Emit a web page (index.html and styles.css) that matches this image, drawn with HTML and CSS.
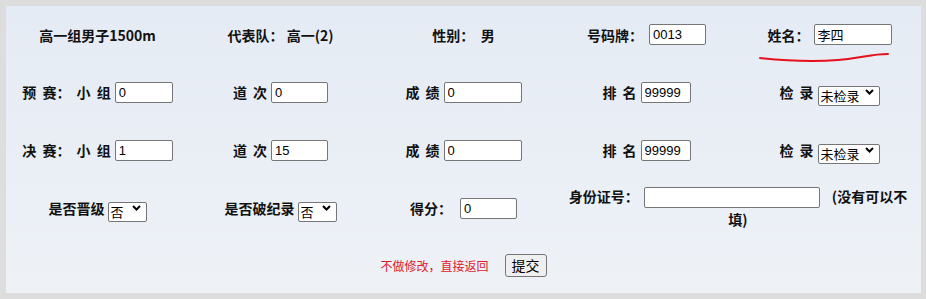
FILE: index.html
```html
<!DOCTYPE html>
<html lang="zh-CN">
<head>
<meta charset="utf-8">
<title>成绩修改</title>
<link rel="stylesheet" href="styles.css">
</head>
<body>
<div class="panel">
  <form class="grid">
    <div class="cell"><span class="lbl">高一组男子1500m</span></div>
    <div class="cell"><span class="lbl">代表队：&nbsp;高一(2)</span></div>
    <div class="cell"><span class="lbl">性别：&nbsp;&nbsp;男</span></div>
    <div class="cell"><span class="lbl">号码牌：</span><input class="in w57 ml6" type="text" value="0013"></div>
    <div class="cell"><span class="lbl">姓名：</span><input class="in w78 ml4" type="text" value="李四"></div>

    <div class="cell"><span class="lbl sp">预 赛： 小 组</span><input class="in w58 ml4" type="text" value="0"></div>
    <div class="cell"><span class="lbl sp">道 次</span><input class="in w57 ml4" type="text" value="0"></div>
    <div class="cell"><span class="lbl sp">成 绩</span><input class="in w78 ml4" type="text" value="0"></div>
    <div class="cell"><span class="lbl sp">排 名</span><input class="in w50 ml4" type="text" value="99999"></div>
    <div class="cell"><span class="lbl sp">检 录</span><span class="selwrap ml4"><select class="sel w62"><option>未检录</option><option>已检录</option></select><svg class="chev" width="9" height="6" viewBox="0 0 9 6"><path d="M1 1 L4.5 4.5 L8 1" fill="none" stroke="#000" stroke-width="2"/></svg></span></div>

    <div class="cell"><span class="lbl sp">决 赛： 小 组</span><input class="in w58 ml4" type="text" value="1"></div>
    <div class="cell"><span class="lbl sp">道 次</span><input class="in w57 ml4" type="text" value="15"></div>
    <div class="cell"><span class="lbl sp">成 绩</span><input class="in w78 ml4" type="text" value="0"></div>
    <div class="cell"><span class="lbl sp">排 名</span><input class="in w50 ml4" type="text" value="99999"></div>
    <div class="cell"><span class="lbl sp">检 录</span><span class="selwrap ml4"><select class="sel w62"><option>未检录</option><option>已检录</option></select><svg class="chev" width="9" height="6" viewBox="0 0 9 6"><path d="M1 1 L4.5 4.5 L8 1" fill="none" stroke="#000" stroke-width="2"/></svg></span></div>

    <div class="cell"><span class="lbl">是否晋级</span><span class="selwrap ml3"><select class="sel w39"><option>否</option><option>是</option></select><svg class="chev" width="9" height="6" viewBox="0 0 9 6"><path d="M1 1 L4.5 4.5 L8 1" fill="none" stroke="#000" stroke-width="2"/></svg></span></div>
    <div class="cell"><span class="lbl">是否破纪录</span><span class="selwrap ml3"><select class="sel w39"><option>否</option><option>是</option></select><svg class="chev" width="9" height="6" viewBox="0 0 9 6"><path d="M1 1 L4.5 4.5 L8 1" fill="none" stroke="#000" stroke-width="2"/></svg></span></div>
    <div class="cell"><span class="lbl">得分：</span><input class="in w57 ml8" type="text" value="0"></div>
    <div class="cell span2"><div class="idwrap"><span class="lbl">身份证号：</span><input class="in w176 idin" type="text" value=""><span class="lbl">(没有可以不填)</span></div></div>

    <div class="cell span5"><span class="back">不做修改，直接返回</span><button class="btn" type="button">提交</button></div>
  </form>
  <svg class="mark" width="140" height="14" viewBox="0 0 140 14"><path d="M2 8 C 30 11, 55 12, 80 10 S 112 4, 130 4" fill="none" stroke="#e4101a" stroke-width="2" stroke-linecap="round"/></svg>
</div>
</body>
</html>
```
FILE: styles.css
```css
html, body {
  margin: 0;
  padding: 0;
}
body {
  background: #dddddd;
  width: 926px;
  height: 299px;
  overflow: hidden;
  font-family: "Noto Sans CJK SC", "Liberation Sans", sans-serif;
}
.panel {
  position: relative;
  margin: 6px 5px 0 6px;
  height: 287px;
  background: linear-gradient(to bottom, #e5ebf4 0%, #eef2f7 100%);
}
.grid {
  display: grid;
  grid-template-columns: repeat(5, 183px);
  grid-template-rows: 57px 58px 58px 58px 56px;
  margin: 0;
}
.cell {
  display: flex;
  align-items: center;
  justify-content: center;
  white-space: nowrap;
}
.span2 { grid-column: span 2; }
.span5 { grid-column: span 5; }
.lbl {
  font-size: 14px;
  font-weight: 700;
  color: #111;
  line-height: 20px;
}
.sp { word-spacing: 3px; }
.in {
  box-sizing: border-box;
  height: 21px;
  border: 1px solid #767676;
  border-radius: 2px;
  background: #fff;
  padding: 0 3px;
  margin: 0;
  font-family: "Liberation Sans", "Noto Sans CJK SC", sans-serif;
  font-size: 13px;
  color: #000;
  vertical-align: middle;
}
.w50 { width: 50px; }
.w57 { width: 57px; }
.w58 { width: 58px; }
.w78 { width: 78px; }
.w176 { width: 176px; }
.ml3 { margin-left: 3px; }
.ml4 { margin-left: 4px; }
.ml6 { margin-left: 6px; }
.ml8 { margin-left: 8px; }
.selwrap {
  position: relative;
  display: inline-block;
  height: 20px;
}
.sel {
  -webkit-appearance: none;
  appearance: none;
  box-sizing: border-box;
  height: 20px;
  border: 1px solid #767676;
  border-radius: 2px;
  background: #fff;
  padding: 0 0 0 2px;
  margin: 0;
  font-family: "Noto Sans CJK SC", sans-serif;
  font-size: 13px;
  line-height: 18px;
  color: #000;
}
.w39 { width: 39px; }
.w62 { width: 62px; }
.chev {
  position: absolute;
  right: 6px;
  top: 7px;
  pointer-events: none;
}
.idwrap {
  width: 350px;
  white-space: normal;
  text-align: center;
  line-height: 20px;
  margin-top: -2px;
}
.idin {
  margin: 0 12px 0 5px;
}
.back {
  font-size: 12px;
  color: #e0182b;
}
.btn {
  box-sizing: border-box;
  width: 42px;
  height: 23px;
  margin-left: 16px;
  padding: 0;
  border: 1px solid #767676;
  border-radius: 3px;
  background: #efefef;
  font-family: "Noto Sans CJK SC", sans-serif;
  font-size: 14px;
  color: #000;
}
.mark {
  position: absolute;
  left: 752px;
  top: 44px;
}
```
